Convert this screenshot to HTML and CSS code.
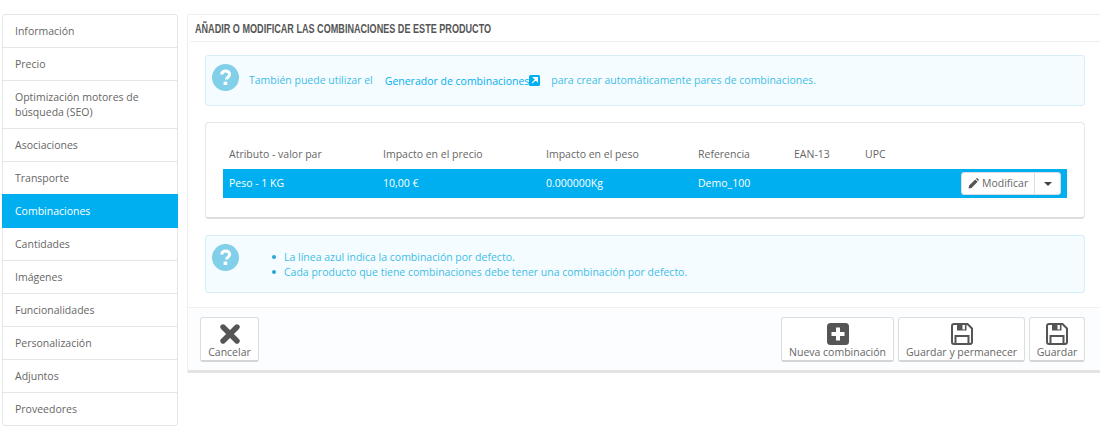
FILE: index.html
```html
<!DOCTYPE html>
<html lang="es">
<head>
<meta charset="utf-8">
<title>Combinaciones</title>
<link rel="stylesheet" href="styles.css">
</head>
<body>
<nav class="tabs">
  <a class="tab">Información</a>
  <a class="tab">Precio</a>
  <a class="tab">Optimización motores de búsqueda (SEO)</a>
  <a class="tab">Asociaciones</a>
  <a class="tab">Transporte</a>
  <a class="tab active">Combinaciones</a>
  <a class="tab">Cantidades</a>
  <a class="tab">Imágenes</a>
  <a class="tab">Funcionalidades</a>
  <a class="tab">Personalización</a>
  <a class="tab">Adjuntos</a>
  <a class="tab">Proveedores</a>
</nav>
<main class="panel">
  <h3 class="panel-heading"><span class="heading-text">Añadir o modificar las combinaciones de este producto</span></h3>
  <div class="panel-body">
    <div class="alert alert-top">
      <svg class="q-icon" viewBox="0 0 27 27"><circle cx="13.5" cy="13.5" r="13.5" fill="#81cfe8"/><path d="M9.6 10.4c.4-2.2 2-3.4 4-3.4 2.3 0 4 1.4 4 3.4 0 2.6-3.1 2.8-3.1 5.1" fill="none" stroke="#fff" stroke-width="3"/><rect x="11.6" y="17.6" width="3.6" height="3.4" fill="#fff"/></svg>
      <p class="alert-line">
        <span>También puede utilizar el</span>
        <a class="gen-link">Generador de combinaciones<svg class="ext-icon" viewBox="0 0 11 11"><rect width="11" height="11" rx="1.5" fill="#00aff0"/><path d="M3 8.2 7.2 4M4.6 2.6h3.8v3.8z" fill="#fff" stroke="#fff" stroke-width="1.2"/></svg></a>
        <span>para crear automáticamente pares de combinaciones.</span>
      </p>
    </div>
    <div class="well">
      <table class="combos">
        <thead>
          <tr><th class="c1">Atributo - valor par</th><th class="c2">Impacto en el precio</th><th class="c3">Impacto en el peso</th><th class="c4">Referencia</th><th class="c5">EAN-13</th><th class="c6">UPC</th><th></th></tr>
        </thead>
        <tbody>
          <tr>
            <td>Peso - 1 KG</td><td>10,00 €</td><td>0.000000Kg</td><td>Demo_100</td><td></td><td></td>
            <td class="actions">
              <div class="btn-group">
                <span class="btn-mod"><svg class="pencil" viewBox="0 0 12 12"><path d="M0.6 11.4 1.2 8.2 7.9 1.5 10.5 4.1 3.8 10.8zM8.6 .9l.6-.5c.4-.3.9-.3 1.2 0l1.2 1.2c.3.3.3.8 0 1.2l-.5.6z" fill="#555"/></svg>Modificar</span>
                <span class="btn-caret"><i class="caret"></i></span>
              </div>
            </td>
          </tr>
        </tbody>
      </table>
    </div>
    <div class="alert alert-bottom">
      <svg class="q-icon" viewBox="0 0 27 27"><circle cx="13.5" cy="13.5" r="13.5" fill="#81cfe8"/><path d="M9.6 10.4c.4-2.2 2-3.4 4-3.4 2.3 0 4 1.4 4 3.4 0 2.6-3.1 2.8-3.1 5.1" fill="none" stroke="#fff" stroke-width="3"/><rect x="11.6" y="17.6" width="3.6" height="3.4" fill="#fff"/></svg>
      <ul class="notes">
        <li>La línea azul indica la combinación por defecto.</li>
        <li>Cada producto que tiene combinaciones debe tener una combinación por defecto.</li>
      </ul>
    </div>
  </div>
  <footer class="panel-footer">
    <a class="tool-btn btn-cancel"><svg class="tool-icon" viewBox="0 0 22 22"><path d="M4 4 18 18M18 4 4 18" stroke="#555" stroke-width="5.4" stroke-linecap="round"/></svg>Cancelar</a>
    <span class="spacer"></span>
    <a class="tool-btn btn-new"><svg class="tool-icon" viewBox="0 0 22 22"><rect width="22" height="22" rx="3.5" fill="#555"/><path d="M11 4.5v13M4.5 11h13" stroke="#fff" stroke-width="4"/></svg>Nueva combinación</a>
    <a class="tool-btn btn-stay"><svg class="tool-icon" viewBox="0 0 22 22"><path d="M1 3c0-1.1.9-2 2-2h13.5L21 5.5V19c0 1.1-.9 2-2 2H3c-1.1 0-2-.9-2-2z" fill="none" stroke="#555" stroke-width="2"/><rect x="6" y="1" width="9.5" height="6.5" fill="#555"/><rect x="11.5" y="2" width="2.4" height="4.4" fill="#fff"/><path d="M4.5 20.5V13h13v7.5" fill="none" stroke="#555" stroke-width="2"/></svg>Guardar y permanecer</a>
    <a class="tool-btn btn-save"><svg class="tool-icon" viewBox="0 0 22 22"><path d="M1 3c0-1.1.9-2 2-2h13.5L21 5.5V19c0 1.1-.9 2-2 2H3c-1.1 0-2-.9-2-2z" fill="none" stroke="#555" stroke-width="2"/><rect x="6" y="1" width="9.5" height="6.5" fill="#555"/><rect x="11.5" y="2" width="2.4" height="4.4" fill="#fff"/><path d="M4.5 20.5V13h13v7.5" fill="none" stroke="#555" stroke-width="2"/></svg>Guardar</a>
  </footer>
</main>
</body>
</html>
```
FILE: styles.css
```css
* { box-sizing: border-box; }
html, body { height: 432px; overflow: hidden; }
body {
  margin: 0;
  padding: 14px 0 0 2px;
  display: flex;
  align-items: flex-start;
  gap: 9px;
  background: #fff;
  color: #555;
  font: 10.5px/15px "Open Sans", "Noto Sans", sans-serif;
}
.tabs {
  width: 176px;
  flex: none;
  display: flex;
  flex-direction: column;
  background: #fff;
  border: 1px solid #e6e6e6;
  border-radius: 3px;
}
.tab {
  padding: 9px 12px 8px;
  border-bottom: 1px solid #e6e6e6;
  color: #666;
  min-height: 33px;
}
.tab:last-child { border-bottom: 0; min-height: 32px; }
.tab.active {
  background: #00aff0;
  color: #fff;
  margin: -1px -1px 0 -1px;
  padding: 10px 13px 8px;
  border-bottom: 1px solid #00aff0;
  min-height: 34px;
}
.panel {
  flex: 1;
  height: 359px;
  margin-right: -4px;
  display: flex;
  flex-direction: column;
  background: #fff;
  border: 1px solid #eee;
  border-bottom: 0;
  border-radius: 3px 3px 0 0;
}
.panel-heading {
  margin: 0 0 0 2px;
  height: 27px;
  padding: 7px 0 0 5px;
  border-bottom: 1px solid #eee;
  font: 700 12px/15px "Liberation Sans", sans-serif;
  text-transform: uppercase;
  color: #555;
  white-space: nowrap;
}
.heading-text {
  display: inline-block;
  transform: scaleX(0.757);
  transform-origin: left center;
}
.panel-body {
  flex: 1;
  padding: 13px 19px 0 17px;
}
.alert {
  display: flex;
  width: 880px;
  background: #f5fcff;
  border: 1px solid #d6eef7;
  border-radius: 3px;
  color: #3fbce6;
}
.alert-top { height: 51px; padding: 8px 0 0 6px; gap: 10px; }
.alert-bottom { height: 58px; padding: 8px 0 0 6px; margin-top: 16px; }
.q-icon { width: 27px; height: 27px; flex: none; }
.alert-line { margin: 9px 0 0; display: flex; }
.gen-link {
  margin: 1px 11px 0 12px;
  color: #00aff0;
  display: flex;
}
.ext-icon { width: 11px; height: 11px; margin-top: 1px; }
.well {
  width: 880px;
  height: 97px;
  margin-top: 16px;
  padding: 18px 17px 0;
  background: #fff;
  border: 1px solid #e6e6e6;
  border-bottom: 2px solid #ddd;
  border-radius: 4px;
}
.combos { width: 844px; border-collapse: collapse; table-layout: fixed; }
.combos th {
  padding: 6px 0 0 6px;
  height: 28px;
  vertical-align: top;
  font-weight: 400;
  text-align: left;
  color: #666;
}
.combos .c1 { width: 154px; }
.combos .c2 { width: 163px; }
.combos .c3 { width: 152px; }
.combos .c4 { width: 96px; }
.combos .c5 { width: 71px; }
.combos .c6 { width: 60px; }
.combos td {
  height: 29px;
  padding: 0 0 0 6px;
  background: #00aff0;
  color: #fff;
}
.combos td.actions { padding: 0 6px 0 0; text-align: right; }
.btn-group {
  display: inline-flex;
  vertical-align: middle;
  height: 23px;
  background: #fff;
  border: 1px solid #ddd;
  border-radius: 3px;
  color: #666;
}
.btn-mod {
  display: flex;
  align-items: center;
  gap: 3px;
  padding: 0 6px 0 6px;
  border-right: 1px solid #ddd;
  width: 73px;
}
.pencil { width: 11px; height: 11px; flex: none; }
.btn-caret { display: flex; align-items: center; justify-content: center; width: 25px; }
.caret {
  width: 0;
  height: 0;
  border: 4px solid transparent;
  border-top: 4px solid #444;
  border-bottom: 0;
}
.notes { margin: 6px 0 0 45px; padding: 0; list-style: none; }
.notes li { position: relative; }
.notes li::before {
  content: "";
  position: absolute;
  left: -12px;
  top: 5px;
  width: 4px;
  height: 4px;
  border-radius: 50%;
  background: #25a9d4;
}
.panel-footer {
  display: flex;
  align-items: flex-start;
  gap: 4px;
  height: 66px;
  padding: 9px 14px 0 12px;
  background: #fcfdfe;
  border-top: 1px solid #f0f0f0;
  border-bottom: 3px solid #e3e3e3;
}
.spacer { flex: none; width: 514px; }
.tool-btn {
  display: flex;
  flex-direction: column;
  align-items: center;
  height: 45px;
  padding-top: 5px;
  background: #fff;
  border: 1px solid #ddd;
  border-bottom: 2px solid #d5d5d5;
  border-radius: 3px;
  color: #666;
  white-space: nowrap;
}
.tool-icon { width: 22px; height: 22px; flex: none; }
.btn-cancel { width: 59px; }
.btn-new { width: 113px; }
.btn-stay { width: 127px; }
.btn-save { width: 56px; }
```
